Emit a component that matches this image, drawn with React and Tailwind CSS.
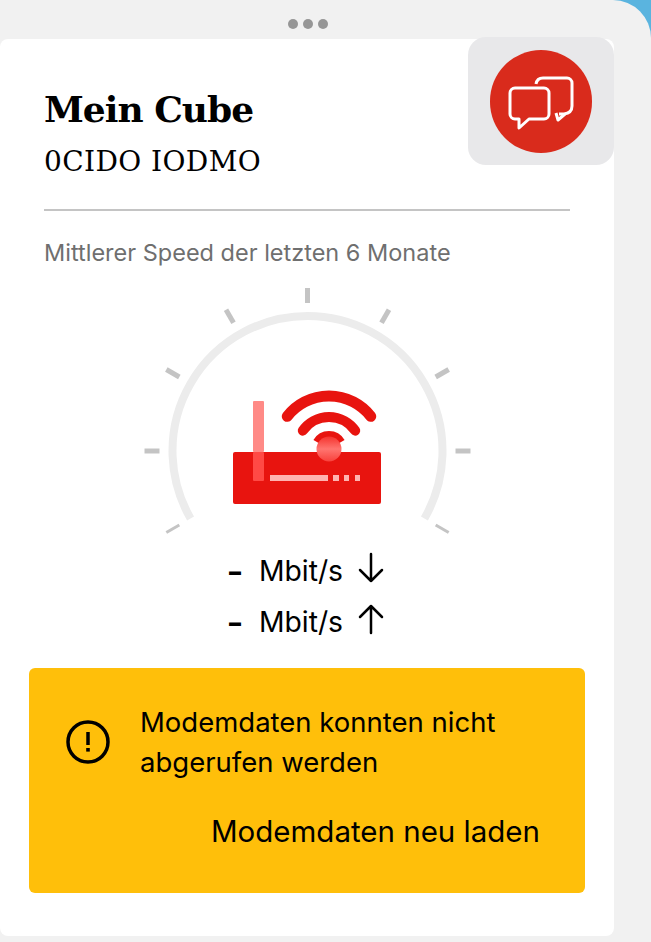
const ticks = [-120, -90, -60, -30, 0, 30, 60, 90, 120];

const polar = (r, deg, cx = 177.5, cy = 171) => {
  const a = (deg * Math.PI) / 180;
  return [cx + r * Math.sin(a), cy - r * Math.cos(a)];
};

const arcPath = (r, from, to, cx, cy) => {
  const [x1, y1] = polar(r, from, cx, cy);
  const [x2, y2] = polar(r, to, cx, cy);
  const large = to - from > 180 ? 1 : 0;
  return `M${x1} ${y1}A${r} ${r} 0 ${large} 1 ${x2} ${y2}`;
};

const Gauge = () => (
  <svg width="350" height="260" viewBox="2 0 350 260" className="block">
    <defs>
      <linearGradient id="led" x1="0" y1="0" x2="0" y2="1">
        <stop offset="0" stopColor="#f5332e" />
        <stop offset="0.5" stopColor="#ff7570" />
        <stop offset="1" stopColor="#f8413c" />
      </linearGradient>
    </defs>
    <path d={arcPath(135, -120, 120)} fill="none" stroke="#ececec" strokeWidth="8" />
    {ticks.map(deg => {
      const [x1, y1] = polar(148, deg);
      const [x2, y2] = polar(163, deg);
      return <line key={deg} x1={x1} y1={y1} x2={x2} y2={y2} stroke="#c4c4c4" strokeWidth={Math.abs(deg) === 120 ? 3 : 5} />;
    })}
    <rect x="103" y="172" width="148" height="52" rx="2" fill="#e8140f" />
    <path d={arcPath(53, -52, 52, 199, 169)} fill="none" stroke="#e8140f" strokeWidth="11" strokeLinecap="round" />
    <path d={arcPath(32, -55, 55, 199, 169)} fill="none" stroke="#e8140f" strokeWidth="10" strokeLinecap="round" />
    <path d={arcPath(14, -60, 60, 199, 169)} fill="none" stroke="#e8140f" strokeWidth="8" />
    <circle cx="199" cy="169" r="12.500" fill="url(#led)" />
    <rect x="123" y="121" width="11" height="51" rx="1" fill="#ff8a86" />
    <rect x="123" y="172" width="11" height="29" rx="1" fill="#ff4a45" />
    <rect x="140" y="195" width="58" height="6" fill="#ffb3b0" />
    <rect x="203" y="195" width="6" height="6" fill="#ffb3b0" />
    <rect x="214" y="195" width="5" height="6" fill="#ffb3b0" />
    <rect x="225" y="195" width="5" height="6" fill="#ffb3b0" />
  </svg>
);

const ChatIcon = () => (
  <svg width="66" height="56" viewBox="0 0 66 56" fill="none" stroke="#fff" strokeWidth="3" strokeLinejoin="round" className="mt-[3px]">
    <path d="M7 13h29a5 5 0 0 1 5 5v21a5 5 0 0 1-5 5H21l-10 9v-9H7a5 5 0 0 1-5-5V18a5 5 0 0 1 5-5Z" />
    <path d="M28 9q1-6 7-6h24a5 5 0 0 1 5 5v23q0 7-8 8h-5" />
    <path d="M48 38l2 7 7-6" />
  </svg>
);

const SpeedRow = ({ up }) => (
  <div className="flex items-center h-[51px]">
    <span className="w-[30px] text-[24px] font-black leading-none">–</span>
    <span className="text-[28.300px] leading-none">Mbit/s</span>
    <svg width="28" height="32" viewBox="0 0 28 32" fill="none" stroke="#000" strokeWidth="2.500" strokeLinecap="round" strokeLinejoin="round" className="ml-[14px] -mt-[8px]">
      {up
        ? <path d="M14 30V3M3 14L14 3l11 11" />
        : <path d="M14 2v27M3 18l11 11 11-11" />}
    </svg>
  </div>
);

const App = () => {
  return (
    <div className="w-[651px] h-[942px] bg-[#5ab4df] overflow-hidden font-['Inter',sans-serif] text-black">
      <div className="h-full bg-[#f1f1f1] rounded-tr-[38px] flex flex-col">
        <div className="w-[614px] h-[39px] flex items-center justify-center gap-[5px] pl-[1px] pt-[9px] shrink-0">
          <span className="w-[10px] h-[10px] rounded-full bg-[#969696]" />
          <span className="w-[10px] h-[10px] rounded-full bg-[#969696]" />
          <span className="w-[10px] h-[10px] rounded-full bg-[#969696]" />
        </div>

        <div className="relative w-[614px] h-[897px] bg-white rounded-[8px]">
          <div className="absolute right-0 -top-[2px] w-[146px] h-[128px] rounded-[18px] bg-[#e8e8ea] flex items-center justify-center">
            <div className="w-[102px] h-[103px] rounded-full bg-[#d92b1c] flex items-center justify-center">
              <ChatIcon />
            </div>
          </div>

          <div className="px-[44px] pt-[50px]">
            <h1 className="font-['DejaVu_Serif',serif] font-bold text-[36px] leading-[40px] tracking-[-1px]">Mein Cube</h1>
            <p className="font-['DejaVu_Serif',serif] text-[28px] leading-[30px] mt-[18px] tracking-[0.4px]">0CIDO IODMO</p>
            <div className="h-[2px] bg-[#c4c4c4] mt-[32px] w-[526px]" />
            <p className="mt-[27px] text-[23.500px] leading-[30px] text-[#6f6f6f]">Mittlerer Speed der letzten 6 Monate</p>
          </div>

          <div className="flex justify-center mt-[12px]">
            <Gauge />
          </div>

          <div className="flex flex-col items-center mt-[6px]">
            <SpeedRow />
            <SpeedRow up />
          </div>

          <div className="mx-[29px] mt-[20px] h-[225px] rounded-[6px] bg-[#ffbf0a] flex flex-col">
            <div className="flex items-center mt-[34px]">
              <svg width="44" height="44" viewBox="0 0 44 44" fill="none" className="ml-[37px] shrink-0">
                <circle cx="22" cy="22" r="20" stroke="#000" strokeWidth="3.500" />
                <path d="M22 12v13" stroke="#000" strokeWidth="3.500" />
                <rect x="20.200" y="28" width="3.600" height="3.600" fill="#000" />
              </svg>
              <p className="ml-[30px] text-[27.500px] leading-[40px]">Modemdaten konnten nicht<br />abgerufen werden</p>
            </div>
            <div className="flex justify-end pr-[45px] mt-[29px]">
              <span className="text-[29.500px] leading-[40px]">Modemdaten neu laden</span>
            </div>
          </div>
        </div>
      </div>
    </div>
  );
};

export default App;
